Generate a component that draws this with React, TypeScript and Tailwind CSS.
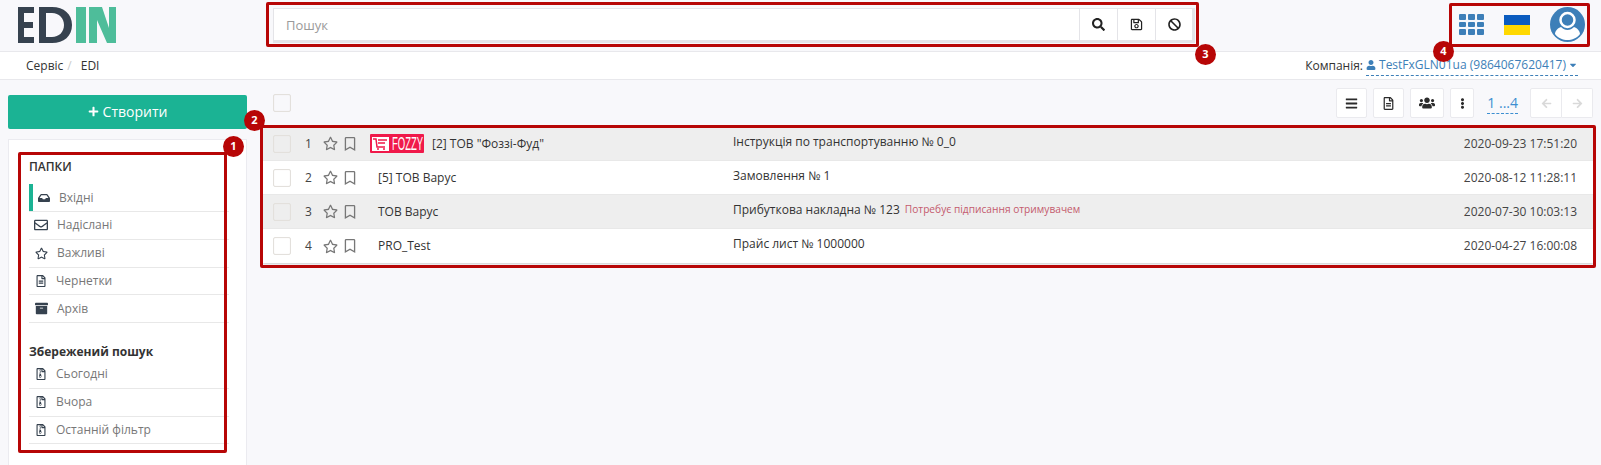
import {
  FaInbox,
  FaArchive,
  FaUser,
  FaUsers,
  FaCaretDown,
  FaRegEnvelope,
  FaRegStar,
  FaRegBookmark,
  FaRegFileAlt,
  FaRegFileArchive,
  FaSearch,
  FaRegSave,
  FaBan,
  FaBars,
  FaEllipsisV,
  FaArrowLeft,
  FaArrowRight,
  FaPlus,
} from "react-icons/fa";

const folders = [
  { name: "Надіслані", icon: <FaRegEnvelope size={14} />, gap: "gap-[9px]" },
  { name: "Важливі", icon: <FaRegStar size={13} />, gap: "gap-[9px]" },
  { name: "Чернетки", icon: <FaRegFileAlt size={12} />, gap: "gap-[8px]" },
  { name: "Архів", icon: <FaArchive size={13} />, gap: "gap-[9px]" },
];

const saved = ["Сьогодні", "Вчора", "Останній фільтр"];

const rows = [
  { n: 1, from: '[2] ТОВ "Фоззі-Фуд"', doc: "Інструкція по транспортуванню № 0_0", date: "2020-09-23 17:51:20", logo: true },
  { n: 2, from: "[5] ТОВ Варус", doc: "Замовлення № 1", date: "2020-08-12 11:28:11" },
  { n: 3, from: "ТОВ Варус", doc: "Прибуткова накладна № 123", note: "Потребує підписання отримувачем", date: "2020-07-30 10:03:13" },
  { n: 4, from: "PRO_Test", doc: "Прайс лист № 1000000", date: "2020-04-27 16:00:08" },
];

function Frame({ className, badge, badgeClass }: { className: string; badge: string; badgeClass: string }) {
  return (
    <div className={`pointer-events-none absolute rounded-[2px] border-[3px] border-[#b70606] ${className}`}>
      <span className={`absolute flex h-[21px] w-[21px] items-center justify-center rounded-full bg-[#b70606] text-[11px] font-bold text-white ${badgeClass}`}>
        {badge}
      </span>
    </div>
  );
}

function Logo() {
  return (
    <svg width="98" height="36" viewBox="0 0 98 36" className="block">
      <path fill="#36424f" d="M0 0h16v6H6v9h9v6H6v9h10v6H0z" />
      <path fill="#36424f" fillRule="evenodd" d="M21 0h13c12 0 20 7 20 18S46 36 34 36H21zM28 6v24h6c7 0 12-5 12-12S41 6 34 6z" />
      <path fill="#4ebd9a" d="M58 0h10v36H58zM71 0h8v36h-8zM79 0h5l7 21v15h-2l-10-23zM91 0h7v36h-7z" />
    </svg>
  );
}

function FozzyLogo() {
  return (
    <div className="flex h-[19px] w-[54px] flex-none items-center rounded-[1px] bg-[#f0194a] pl-[2px] text-white">
      <svg width="17" height="15" viewBox="0 0 17 15" className="flex-none">
        <path fill="#fff" d="M0 1h17v14H0z" />
        <path fill="none" stroke="#f0194a" strokeWidth="1.500" d="M1 3h3l1 8h8M6 4h9M6 7h7" />
        <circle cx="6" cy="13" r="1" fill="#f0194a" />
        <circle cx="12" cy="13" r="1" fill="#f0194a" />
      </svg>
      <span className="ml-[3px] scale-y-[2] whitespace-nowrap font-['Liberation_Sans',sans-serif] text-[9.500px] leading-none">FOZZY</span>
    </div>
  );
}

function Avatar() {
  return (
    <svg width="35" height="35" viewBox="0 0 35 35" className="block">
      <circle cx="17.500" cy="17.500" r="17.500" fill="#3d7fb8" />
      <circle cx="17.500" cy="13" r="7" fill="#3d7fb8" stroke="#fff" strokeWidth="2.500" />
      <path fill="#fff" d="M11 20c-3 1-6 4-6 7 3 4 8 6 12.500 6s9.500-2 12.500-6c0-3-3-6-6-7-2 2-4 3-6.500 3s-4.500-1-6.500-3z" />
    </svg>
  );
}

function ToolButton({ children, className }: { children: React.ReactNode; className: string }) {
  return (
    <button className={`flex h-[30px] items-center justify-center rounded-[2px] border border-[#eaeaee] bg-white text-[#2b2b2b] ${className}`}>
      {children}
    </button>
  );
}

function Checkbox() {
  return <span className="block h-[18px] w-[18px] flex-none rounded-[2px] border border-[#e3e0dc] shadow-[inset_0_0_1px_#e3e0dc]" />;
}

export default function App() {
  return (
    <div className="relative h-[465px] w-full overflow-hidden bg-[#f8f8fb] font-['Open_Sans',sans-serif] text-[12px] text-[#333]">
      {/* top bar */}
      <header className="flex h-[52px] items-start border-b border-[#e8e8ec] pl-[18px]">
        <div className="mt-[7px] w-[255px]">
          <Logo />
        </div>
        <div className="mt-2 flex h-[35px] w-[922px] items-start gap-[1px] bg-[#e4e4e8] pl-[1px] pr-[3px] pt-[1px]">
          <input
            placeholder="Пошук"
            className="h-[31px] min-w-0 flex-1 bg-white pl-[12px] text-[13px] outline-none placeholder:text-[#9a9a9a]"
          />
          <div className="flex h-[31px] w-[37px] items-center justify-center bg-white text-[#222]">
            <FaSearch size={13} />
          </div>
          <div className="flex h-[31px] w-[37px] items-center justify-center bg-white text-[#222]">
            <FaRegSave size={13} />
          </div>
          <div className="flex h-[31px] w-[36px] items-center justify-center bg-white text-[#222]">
            <FaBan size={13} />
          </div>
        </div>
        <div className="ml-auto mr-[16px] mt-[7px] flex items-center">
          <div className="grid grid-cols-3 gap-[2px]">
            {Array.from({ length: 9 }).map((_, i) => (
              <span key={i} className="h-[5.500px] w-[7px] rounded-[1px] bg-[#3d7fb8]" />
            ))}
          </div>
          <div className="ml-[20px] h-[20px] w-[26px]">
            <div className="h-[10px] bg-[#0b5cbf]" />
            <div className="h-[10px] bg-[#ffd800]" />
          </div>
          <div className="ml-[20px]">
            <Avatar />
          </div>
        </div>
      </header>

      {/* breadcrumb */}
      <div className="flex h-[28px] items-center border-b border-[#e8e8ec] bg-white pl-[26px] pr-[23px]">
        <span>Сервіс</span>
        <span className="ml-[4px] mr-[9px] text-[#ccc]">/</span>
        <span>EDI</span>
        <span className="ml-auto">Компанія:</span>
        <span className="ml-[3px] flex h-[20px] items-center gap-[2px] border-b border-dashed border-[#3d7fb8] leading-none text-[#3d7fb8]">
          <FaUser size={10} />
          <span className="ml-[1px]">TestFxGLN01ua (9864067620417)</span>
          <FaCaretDown size={10} />
        </span>
      </div>

      <div className="flex items-start">
        {/* sidebar */}
        <aside className="ml-2 mt-[15px] w-[239px] flex-none">
          <button className="flex h-[34px] w-full items-center justify-center gap-[4px] rounded-[2px] bg-[#1bb394] pb-[2px] text-[14px] text-white">
            <FaPlus size={11} />
            Створити
          </button>
          <div className="mt-[10px] h-[340px] border border-[#ebebf0] bg-white pl-[20px] pr-[17px] pt-[19px] text-[#777]">
            <div className="mb-[9px] font-semibold leading-[16px] text-[#333]">ПАПКИ</div>
            <div className="flex h-[28px] items-center border-b border-[#e8e8e8]">
              <span className="h-full w-1 bg-[#1bb394]" />
              <FaInbox size={12} className="ml-[5px] text-[#36424f]" />
              <span className="ml-[9px]">Вхідні</span>
            </div>
            {folders.map((f) => (
              <div key={f.name} className={`flex h-[27.750px] items-center border-b border-[#e8e8e8] pl-[5px] ${f.gap}`}>
                <span className="flex w-[14px] justify-center text-[#36424f]">{f.icon}</span>
                {f.name}
              </div>
            ))}
            <div className="mb-[1px] mt-[21px] font-bold leading-[16px] text-[#333]">Збережений пошук</div>
            {saved.map((s) => (
              <div key={s} className="flex h-[27.750px] items-center gap-[9px] border-b border-[#e8e8e8] pl-[5px]">
                <span className="flex w-[13px] justify-center text-[#36424f]">
                  <FaRegFileArchive size={12} />
                </span>
                {s}
              </div>
            ))}
          </div>
        </aside>

        {/* documents */}
        <main className="ml-4 min-w-0 flex-1 pr-2">
          <div className="flex h-[47px] items-start pl-[10px] pt-[8px]">
            <div className="mt-[6px]">
              <Checkbox />
            </div>
            <div className="ml-auto flex items-center">
              <ToolButton className="w-[31px]"><FaBars size={13} /></ToolButton>
              <ToolButton className="ml-[6px] w-[31px]"><FaRegFileAlt size={13} /></ToolButton>
              <ToolButton className="ml-[6px] w-[34px]"><FaUsers size={16} /></ToolButton>
              <ToolButton className="ml-[6px] w-[24px]"><FaEllipsisV size={11} /></ToolButton>
              <span className="ml-[13px] border-b border-dashed border-[#3d8fd1] text-[14px] leading-[20px] text-[#3d8fd1]">1 ...4</span>
              <ToolButton className="ml-[12px] w-[32px] rounded-r-none text-[#d9d9d9]"><FaArrowLeft size={11} /></ToolButton>
              <ToolButton className="w-[31px] rounded-l-none border-l-0 text-[#d9d9d9]"><FaArrowRight size={11} /></ToolButton>
            </div>
          </div>
          <div className="bg-white shadow-[0_1px_2px_#ccc]">
            {rows.map((r) => (
              <div
                key={r.n}
                className={`flex h-[34px] items-center border-b border-[#e8e8e8] pl-[10px] last:border-b-0 ${r.n % 2 ? "bg-[#eeeeee]" : "bg-white"}`}
              >
                <Checkbox />
                <span className="ml-[14px] w-[18px] text-[#444]">{r.n}</span>
                <FaRegStar size={15} className="flex-none text-[#777]" />
                <FaRegBookmark size={14} className="ml-[5px] flex-none text-[#777]" />
                <div className="ml-[13px] flex w-[363px] flex-none items-center">
                  {r.logo ? <FozzyLogo /> : <span className="w-[8px]" />}
                  <span className={r.logo ? "ml-[8px]" : ""}>{r.from}</span>
                </div>
                <span className="-mt-[4px] flex items-center">
                  {r.doc}
                  {r.note && <span className="ml-[5px] text-[10.200px] text-[#c45a6d]">{r.note}</span>}
                </span>
                <span className="ml-auto mr-[16px] text-[#444]">{r.date}</span>
              </div>
            ))}
          </div>
        </main>
      </div>

      {/* annotation frames */}
      <Frame className="left-[18px] top-[152px] h-[301px] w-[209px]" badge="1" badgeClass="-right-[20px] -top-[19px]" />
      <Frame className="left-[260px] top-[125px] h-[143px] w-[1336px]" badge="2" badgeClass="-left-[19px] -top-[18px]" />
      <Frame className="left-[266px] top-[2px] h-[45px] w-[933px]" badge="3" badgeClass="-right-[20px] top-[39px]" />
      <Frame className="left-[1449px] top-[3px] h-[44px] w-[141px]" badge="4" badgeClass="-left-[19px] top-[35px]" />
    </div>
  );
}
